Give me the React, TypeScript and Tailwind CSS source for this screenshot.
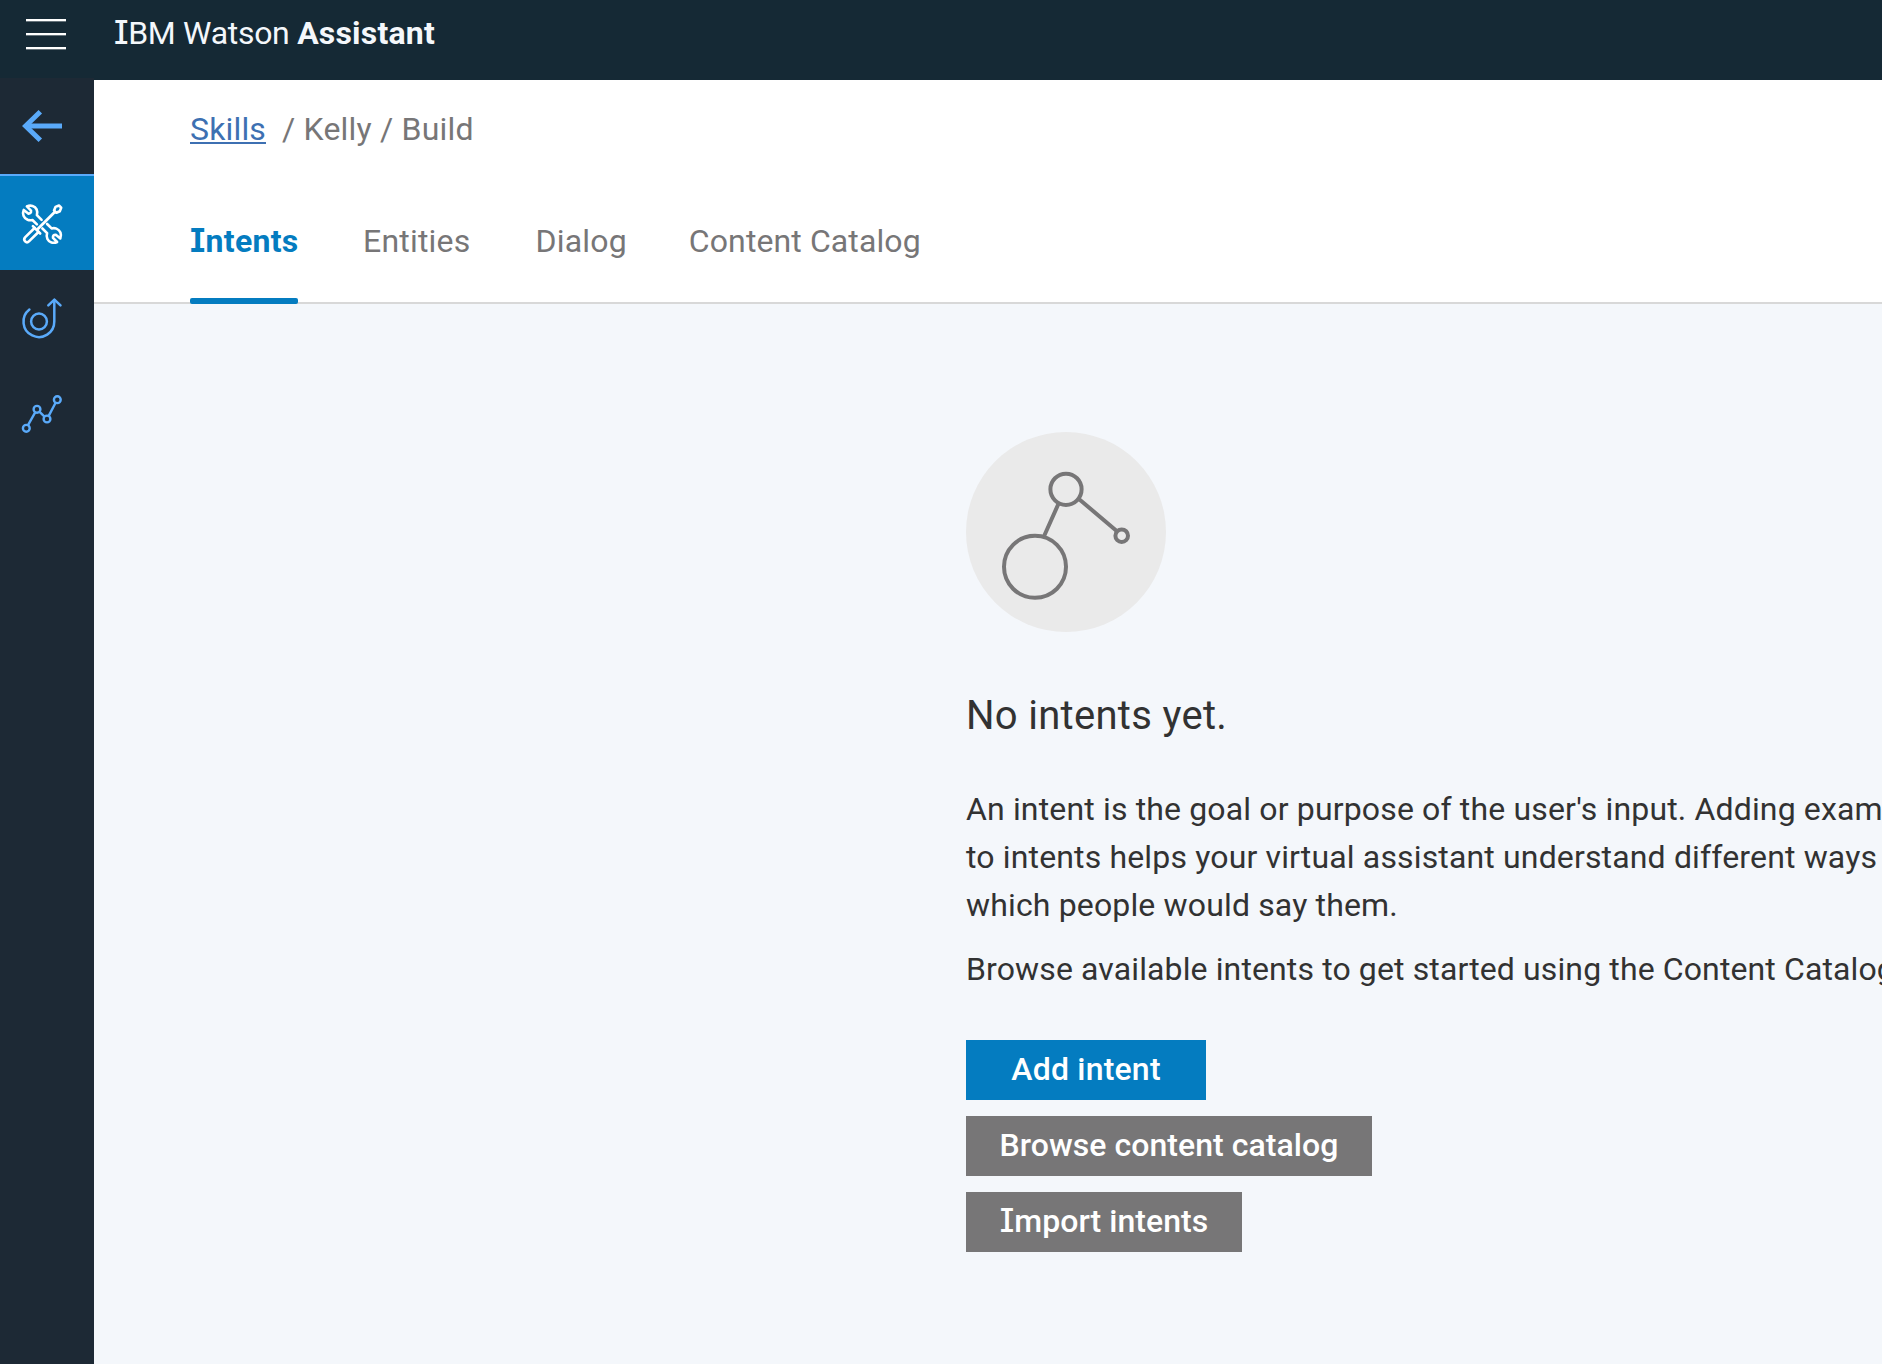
import type { ReactNode } from "react";

/** Capital I with serifs, as in the product typeface. */
function SerifI({ className = "" }: { className?: string }) {
  return <span className={`font-['Inter'] [font-feature-settings:'cv08'] leading-none ${className}`}>I</span>;
}

function ArrowLeftIcon() {
  return (
    <svg width="40" height="40" viewBox="0 0 40 40" fill="none" stroke="#5aaafa">
      <path d="M3 20H40" strokeWidth="5" />
      <path d="M18.3 5.7L3.6 20L18.3 34.3" strokeWidth="5" />
    </svg>
  );
}

function ToolsIcon() {
  const wrench =
    "M12.9 12.4C16.6 10.6 21 12 22.6 15.4C23.5 17.4 23.5 19.4 22.9 21.2L27.6 25.9M12.9 12.4L17 16.6C17.3 18.6 16.2 19.8 14.2 19.6L9.7 16C8 20 9.7 24.2 13.6 25.8C15.2 26.4 16.8 26.4 18.4 26L22.9 30.4";
  return (
    <svg width="60" height="60" viewBox="0 0 60 60" fill="none" stroke="#fff" strokeWidth="2.6" strokeLinecap="round" strokeLinejoin="round">
      <path d={wrench} />
      <path d={wrench} transform="rotate(180 28 30.2)" />
      <path d="M40 16.4L41.5 12.9L45 11.5L47.2 13.7L45.8 17.2L42.4 18.8Z" />
      <path d="M41 17.8L24 34.8" strokeWidth="2.8" />
      <path d="M18.9 32.2L26.2 39.5" />
      <path d="M20.6 34L11.3 43.2C10 44.6 10 46.3 11.1 47.4C12.2 48.5 13.9 48.5 15.2 47.2L24.5 38" />
    </svg>
  );
}

function GoalIcon() {
  return (
    <svg width="60" height="60" viewBox="0 0 60 60" fill="none" stroke="#5aaafa" strokeWidth="2.5" strokeLinecap="round" strokeLinejoin="round">
      <circle cx="25" cy="31.5" r="7.9" />
      <path d="M15.4 19.5A15.4 15.4 0 1 0 40.3 31.5V10" />
      <path d="M34.3 15.4L40.4 9.6L46.5 15.4" />
    </svg>
  );
}

function AnalyticsIcon() {
  const nodes = [
    [12.3, 38.3],
    [23, 19.3],
    [33, 29],
    [43.3, 9.7],
  ];
  return (
    <svg width="60" height="50" viewBox="0 0 60 50" fill="none" stroke="#5aaafa" strokeWidth="2.4">
      {nodes.map(([x, y]) => (
        <circle key={x} cx={x} cy={y} r="3.4" />
      ))}
      <path d="M14 35.2L21.2 22.4M25.6 21.8L30.5 26.6M34.7 25.9L41.6 12.8" />
    </svg>
  );
}

function IntentIllustration() {
  return (
    <svg width="200" height="200" viewBox="0 0 200 200" fill="none" stroke="#777677" strokeWidth="4" className="block">
      <circle cx="100" cy="100" r="100" fill="#eaeaea" stroke="none" />
      <circle cx="69" cy="134.8" r="31" />
      <circle cx="100" cy="57.3" r="15.6" />
      <circle cx="155.7" cy="103.7" r="6.3" />
      <path d="M92.6 71.5L78 104.3M112.6 66.7L151 99.3" />
    </svg>
  );
}

function MenuBar() {
  return <span className="h-0.5 w-10 bg-white shadow-[0_1px_0_rgba(255,255,255,0.35)]" />;
}

function Tab({ children, active = false }: { children: ReactNode; active?: boolean }) {
  return (
    <div
      className={
        active
          ? "relative h-[87px] w-[108px] font-bold tracking-[0.3px] text-[#047cc0]"
          : "h-[87px] text-[#777677]"
      }
    >
      {children}
      {active && <span className="absolute inset-x-0 bottom-0 h-1.5 rounded-xs bg-[#047cc0]" />}
    </div>
  );
}

export default function App() {
  return (
    <div className="flex h-[1364px] w-[1882px] flex-col overflow-hidden bg-[#f4f7fb] font-['Roboto','Liberation_Sans',sans-serif] text-[32px] leading-[48px] tracking-[0.15px] whitespace-nowrap text-[#323232]">
      <header className="flex h-20 shrink-0 bg-[#152935]">
        <div className="flex w-[114px] flex-col gap-3 pt-[19px] pl-[26px]">
          <MenuBar />
          <MenuBar />
          <MenuBar />
        </div>
        <h1 className="pt-[9px] font-[450] tracking-[-0.3px] text-[#f4f7fb]">
          <SerifI />
          BM Watson <b className="tracking-[0.2px]">Assistant</b>
        </h1>
      </header>

      <div className="flex min-h-0 flex-1">
        <nav className="-mt-0.5 flex w-[94px] shrink-0 flex-col bg-[#1d2935]">
          <div className="h-24 pt-7 pl-[22px]">
            <ArrowLeftIcon />
          </div>
          <div className="h-24 border-t-2 border-[#5aaafa] bg-[#047cc0] pt-[18px] pl-3.5">
            <ToolsIcon />
          </div>
          <div className="h-24 pt-5 pl-3.5">
            <GoalIcon />
          </div>
          <div className="h-24 pt-6 pl-3.5">
            <AnalyticsIcon />
          </div>
        </nav>

        <main className="min-w-0 flex-1">
          <div className="h-56 border-b-2 border-[#d8d8d8] bg-white pt-[25px] pl-24">
            <div className="flex text-[#777677]">
              <a className="mr-4 text-[#3d70b2] underline decoration-2 underline-offset-2 [text-decoration-skip-ink:none]">Skills</a>
              <span className="tracking-[0.2px]">/ Kelly / Build</span>
            </div>
            <div className="mt-16 flex">
              <Tab active>
                <SerifI className="font-bold" />
                ntents
              </Tab>
              <div className="ml-[65px] flex gap-[65px] tracking-[0.2px]">
                <Tab>Entities</Tab>
                <Tab>Dialog</Tab>
                <div className="-ml-[3px] tracking-[0.1px]">
                  <Tab>Content Catalog</Tab>
                </div>
              </div>
            </div>
          </div>

          <section className="pt-32 pl-[872px]">
            <IntentIllustration />
            <h2 className="mt-[60px] text-[40px] leading-[48px] tracking-[0.3px]">No intents yet.</h2>
            <p className="mt-[45px]">
              An intent is the goal or purpose of the user's input. Adding exam
              <br />
              to intents helps your virtual assistant understand different ways
              <br />
              which people would say them.
            </p>
            <p className="mt-4 tracking-[0.12px]">Browse available intents to get started using the Content Catalog</p>
            <div className="mt-[47px] flex flex-col items-start gap-4 font-[480] tracking-[0.05px] text-white">
              <button className="flex h-[60px] w-60 items-center justify-center bg-[#047cc0] pb-0.5 tracking-[0.2px]">Add intent</button>
              <button className="flex h-[60px] w-[406px] items-center justify-center bg-[#777677] pb-0.5">Browse content catalog</button>
              <button className="flex h-[60px] w-[276px] items-center justify-center bg-[#777677] pb-0.5">
                <span>
                  <SerifI />
                  mport intents
                </span>
              </button>
            </div>
          </section>
        </main>
      </div>
    </div>
  );
}
